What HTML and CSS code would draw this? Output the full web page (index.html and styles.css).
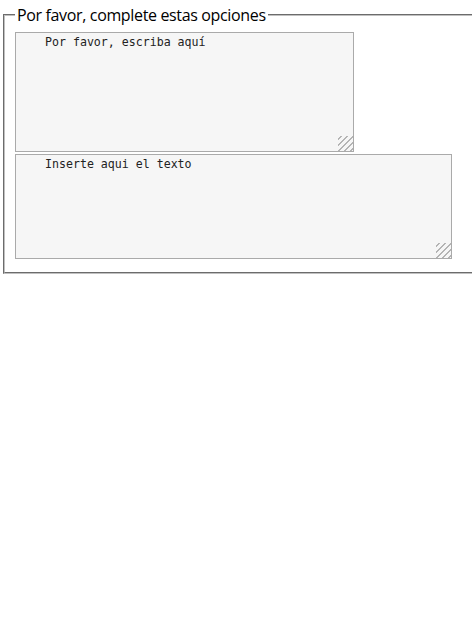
FILE: index.html
```html
<!DOCTYPE html>
<html lang="es">
<head>
<meta charset="utf-8">
<title>Opciones</title>
<link rel="stylesheet" href="styles.css">
</head>
<body>
<form class="form">
  <fieldset class="group">
    <legend class="group-title">Por favor, complete estas opciones</legend>
    <textarea class="field field-small">Por favor, escriba aquí</textarea>
    <textarea class="field field-wide">Inserte aqui el texto</textarea>
  </fieldset>
</form>
</body>
</html>
```
FILE: styles.css
```css
html, body {
  margin: 0;
  padding: 0;
  background: #ffffff;
}
.form {
  margin: 0;
  overflow: hidden;
  width: 472px;
}
.group {
  display: flex;
  flex-direction: column;
  align-items: flex-start;
  gap: 2px;
  margin: 4px 0 0 3px;
  width: 500px;
  padding: 6px 10px 13px 10px;
  border: 2px groove #c0c0c0;
  border-right: none;
  min-width: 0;
  box-sizing: border-box;
}
.group-title {
  font-family: "Open Sans", sans-serif;
  font-size: 16px;
  letter-spacing: -0.35px;
  color: #000;
  padding: 0 2px;
}
.field {
  display: block;
  box-sizing: border-box;
  margin: 0;
  background: #f6f6f6;
  border: 1px solid #aaaaaa;
  font-family: "DejaVu Sans Mono", monospace;
  font-size: 11.6px;
  color: #222;
  padding: 2px 4px 2px 29px;
}
.field::-webkit-resizer {
  background:
    repeating-linear-gradient(135deg, transparent 0 2px, #b4b4b4 2px 3.5px, transparent 3.5px 4.2px);
  -webkit-mask: linear-gradient(135deg, transparent 50%, #000 50%);
  mask: linear-gradient(135deg, transparent 50%, #000 50%);
}
.field-small {
  width: 339px;
  height: 120px;
}
.field-wide {
  width: 437px;
  height: 105px;
}
```
